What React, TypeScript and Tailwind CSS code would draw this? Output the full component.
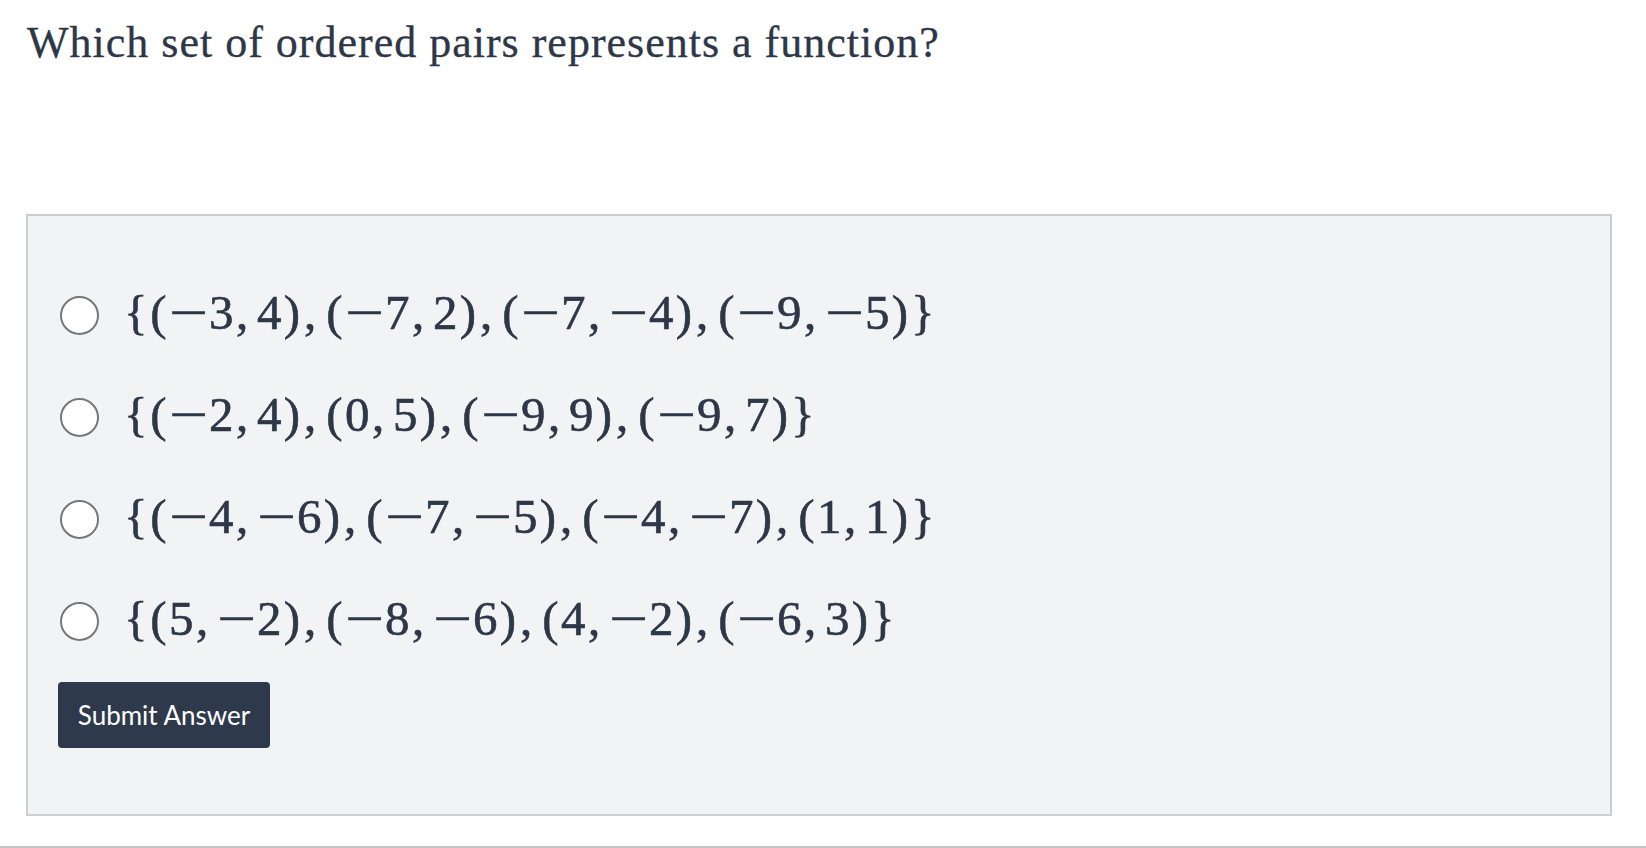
import React from "react";

const options = [
  "{(−3,4),(−7,2),(−7,−4),(−9,−5)}",
  "{(−2,4),(0,5),(−9,9),(−9,7)}",
  "{(−4,−6),(−7,−5),(−4,−7),(1,1)}",
  "{(5,−2),(−8,−6),(4,−2),(−6,3)}",
];

function Token({ ch }: { ch: string }) {
  if (ch === "{" || ch === "}")
    return <span className="inline-block w-[25.5px] text-center">{ch}</span>;
  if (ch === "(" || ch === ")")
    return <span className="inline-block w-[20px] text-center">{ch}</span>;
  if (ch === "−")
    return (
      <span className="inline-block w-[40px] text-center">
        <span className="inline-block scale-x-[1.4]">{ch}</span>
      </span>
    );
  if (ch === ",")
    return <span className="inline-block w-[14.5px] mr-[8px] text-left pl-[2px]">{ch}</span>;
  return <span className="inline-block w-[25.5px] text-center">{ch}</span>;
}

function MathSet({ text }: { text: string }) {
  return (
    <span
      className="ml-[24px] text-[49px] leading-[56px] text-[#2d3748] whitespace-nowrap -translate-y-[2px] [-webkit-text-stroke:0.6px_#2d3748]"
      style={{ fontFamily: '"Liberation Serif", serif' }}
    >
      {Array.from(text).map((ch, i) => (
        <Token key={i} ch={ch} />
      ))}
    </span>
  );
}

export default function App() {
  return (
    <div className="w-[1646px] h-[848px] bg-white border-b-2 border-[#c4c4c4] box-border overflow-hidden">
      <h1
        className="pl-[27px] pt-[19px] text-[44px] leading-[48px] tracking-[1px] text-[#2d3748] font-normal [-webkit-text-stroke:0.3px_#2d3748]"
        style={{ fontFamily: '"Liberation Serif", serif' }}
      >
        Which set of ordered pairs represents a function?
      </h1>
      <div className="ml-[26px] mt-[147px] w-[1586px] h-[602px] box-border border-2 border-[#cbcdd1] bg-[#f2f3f5] pt-[48px] px-[30px]">
        <div className="flex flex-col">
          {options.map((o, i) => (
            <label key={i} className="flex items-center h-[102px]">
              <span className="ml-[2px] w-[39px] h-[39px] rounded-full border-2 border-[#777777] bg-white box-border shrink-0" />
              <MathSet text={o} />
            </label>
          ))}
        </div>
        <button
          className="mt-[10px] w-[212px] h-[66px] rounded-[4px] bg-[#2e3a4c] text-white text-[26px] flex items-center justify-center"
          style={{ fontFamily: 'Lato, "Liberation Sans", sans-serif' }}
        >
          Submit Answer
        </button>
      </div>
    </div>
  );
}
